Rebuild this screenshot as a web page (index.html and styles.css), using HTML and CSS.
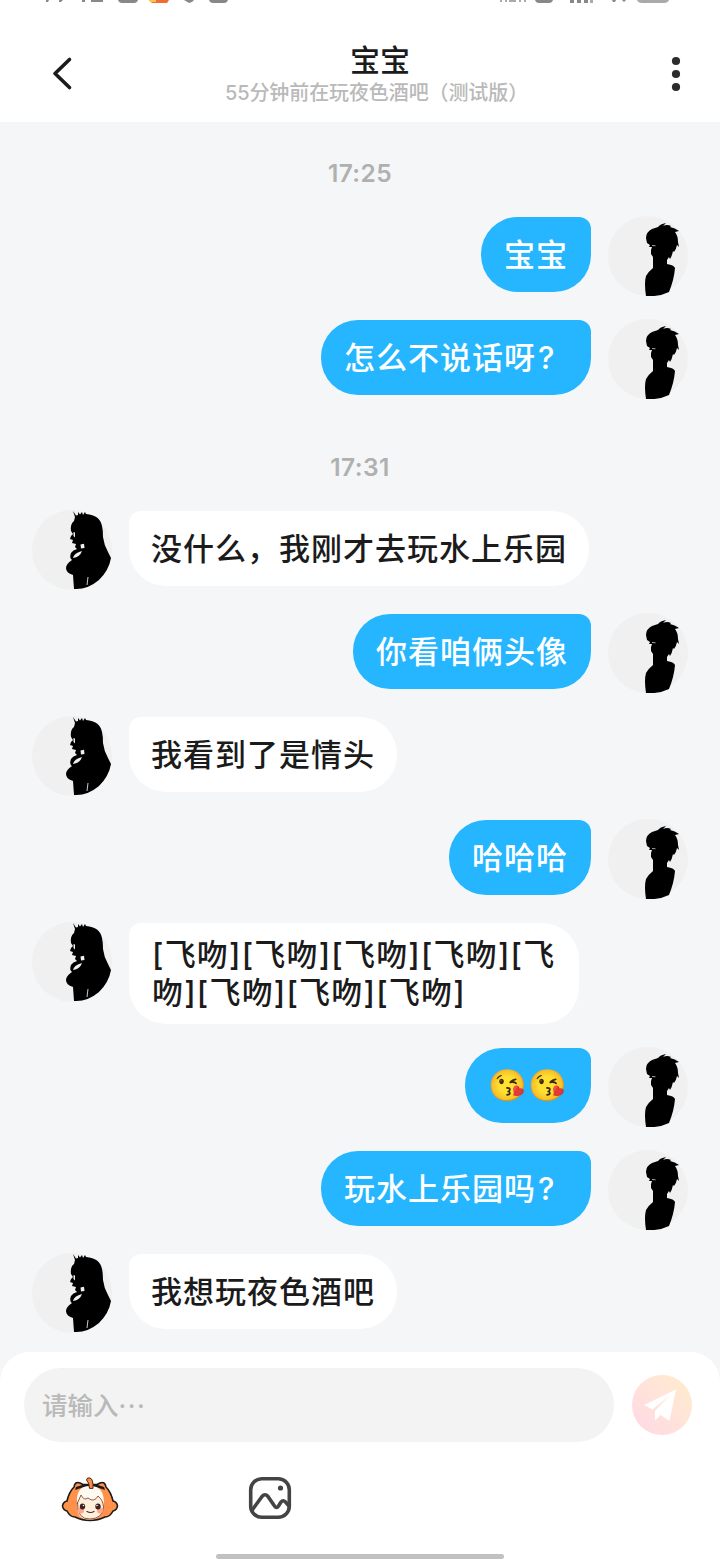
FILE: index.html
```html
<!DOCTYPE html>
<html lang="zh-CN">
<head>
<meta charset="utf-8">
<title>宝宝</title>
<link rel="stylesheet" href="styles.css">
</head>
<body>
<svg class="defs" width="0" height="0">
  <defs>
    <symbol id="boy" viewBox="0 0 100 100">
      <circle cx="48" cy="51" r="40" fill="#f0f0f1"/>
      <path fill="#000" d="M46 33Q46 27 52 24L58 22Q60 19 66 18L63 21Q67 19 71 21L70 22Q75 23 79 26L75 27Q78 31 78 37L79 42L77 40Q76 45 74 47L73 46Q72 51 70 54L69 52L67 55V59Q74 60 75 63Q74 75 69 87Q59 92 46 91Q44 78 46 71Q48 67 53 63V52L51 49V45L52 42L49 42L50 40L47 38Z"/>
      <path d="M52 40.500l3.500 .3" stroke="#ccc" stroke-width=".8"/>
    </symbol>
    <symbol id="girl" viewBox="0 0 100 100">
      <circle cx="47" cy="50" r="40" fill="#f0f0f1"/>
      <path fill="#000" d="M48 11L51 15.500L53 15L53 12L55 14.500L57 12L58 15L60 12L61 14Q75 15 77 26Q78 30 78 37Q79 45 83 52L86 58Q84 70 74 80Q62 90 49 89L48 75Q41 73 41 68Q41 64 47 60Q44 58 46 53Q48 50 52 49L50 47L51 44L47 43L48 40L45 39L46 36L48 34L46 31Q45 24 49 21L50 17Z"/>
      <path fill="#f0f0f1" d="M55.500 44.500l3.500-.8.500 4.300-3.500.5zM48 58Q49 53 57 51Q55 57 48 58zM48.500 32l1.500 .5v5l-1.500-1.500z"/>
      <path d="M63 77l-1 8" stroke="#ccc" stroke-width="1"/>
    </symbol>
  </defs>
</svg>
<div class="screen">
  <svg class="status" viewBox="0 0 720 4" fill="#888">
    <path d="M46 0h3l-1 2h-2zM59 0h4l-2 2h-2zM82 0h3v2h-3zM91 0h12v2H91zM118 0h20q-1 3-4 3h-12q-3 0-4-3zM184 0h10q-2 3-5 3zM209 0h19q-1 3-4 3h-11q-3 0-4-3zM535 0h18q-1 3-4 3h-10q-3 0-4-3zM570 0h4v3h-4zM577 0h4v3h-4zM584 0h4v3h-4zM612 0h4l-1 2h-2zM622 0h4l-2 2z"/>
    <path fill="#aaa" d="M500 0h2v2h-2zM505 0h2v2h-2zM509 0h7v2h-7zM519 0h2v2h-2zM524 0h2v2h-2zM590 0h3v3h-3zM637 0h32q-1 3-5 3h-22q-4 0-5-3z"/>
    <path fill="#f36b32" d="M149 0h20l-2 3h-15z"/>
    <path fill="#f4c84a" d="M149 0h7v2h-6z"/>
  </svg>
  <header class="header">
    <svg class="back" viewBox="0 0 24 36"><path d="M20.500 4.500L6 18.500l14.500 14" fill="none" stroke="#1b1b1b" stroke-width="3.600" stroke-linecap="round" stroke-linejoin="round"/></svg>
    <div class="heading">
      <h1 class="name">宝宝</h1>
      <p class="activity">55分钟前在玩夜色酒吧（测试版）</p>
    </div>
    <svg class="more" viewBox="0 0 10 36" fill="#2c2c2c"><circle cx="5" cy="5" r="4.100"/><circle cx="5" cy="18" r="4.100"/><circle cx="5" cy="31" r="4.100"/></svg>
  </header>

  <main class="chat">
    <time class="time">17:25</time>
    <div class="row me"><p class="bubble">宝宝</p><svg class="avatar" viewBox="8 11 80 80"><use href="#boy" width="100" height="100"/></svg></div>
    <div class="row me"><p class="bubble">怎么不说话呀<span class="mark">?</span></p><svg class="avatar" viewBox="8 11 80 80"><use href="#boy" width="100" height="100"/></svg></div>
    <time class="time">17:31</time>
    <div class="row"><svg class="avatar" viewBox="7 10 80 80"><use href="#girl" width="100" height="100"/></svg><p class="bubble">没什么，我刚才去玩水上乐园</p></div>
    <div class="row me"><p class="bubble">你看咱俩头像</p><svg class="avatar" viewBox="8 11 80 80"><use href="#boy" width="100" height="100"/></svg></div>
    <div class="row"><svg class="avatar" viewBox="7 10 80 80"><use href="#girl" width="100" height="100"/></svg><p class="bubble">我看到了是情头</p></div>
    <div class="row me"><p class="bubble">哈哈哈</p><svg class="avatar" viewBox="8 11 80 80"><use href="#boy" width="100" height="100"/></svg></div>
    <div class="row"><svg class="avatar" viewBox="7 10 80 80"><use href="#girl" width="100" height="100"/></svg><p class="bubble long">[飞吻][飞吻][飞吻][飞吻][飞<br>吻][飞吻][飞吻][飞吻]</p></div>
    <div class="row me"><p class="bubble emoji">😘😘</p><svg class="avatar" viewBox="8 11 80 80"><use href="#boy" width="100" height="100"/></svg></div>
    <div class="row me"><p class="bubble">玩水上乐园吗<span class="mark">?</span></p><svg class="avatar" viewBox="8 11 80 80"><use href="#boy" width="100" height="100"/></svg></div>
    <div class="row"><svg class="avatar" viewBox="7 10 80 80"><use href="#girl" width="100" height="100"/></svg><p class="bubble">我想玩夜色酒吧</p></div>
  </main>

  <footer class="composer">
    <div class="entry">
      <div class="field">请输入<span class="dots">···</span></div>
      <svg class="send" viewBox="0 0 60 60">
        <defs><linearGradient id="glow" x1="0" y1="1" x2="1" y2="0"><stop offset=".15" stop-color="#ffdbe3"/><stop offset=".9" stop-color="#ffebcf"/></linearGradient></defs>
        <circle cx="30" cy="30" r="30" fill="url(#glow)"/>
        <path fill="#fff" d="M44 14.500L12 30l8.500 4.500L37 21 23 36v9.500l5.500-5.500L37.500 46z"/>
      </svg>
    </div>
    <div class="tools">
      <svg class="mascot" viewBox="0 0 80 65" stroke-linejoin="round" stroke-linecap="round">
        <path d="M24 21Q25 15 30 17L33 18.500H47L50 17Q55 15 56 21Q61 26 63 35Q67 36 67.500 40Q67 44 63 45Q60 51 55 51Q48 54.500 40 54.500T25 51Q20 51 17 45Q13 44 12.500 40Q13 36 17 35Q19 26 24 21Z" fill="#ff914b" stroke="#1c1918" stroke-width="1.600"/>
        <path d="M26 21Q40 15 54 21L55 24Q40 17 25 24Z" fill="#1c1918"/>
        <path d="M27.500 41Q24 20 40 20T53.500 41Q53 53 40 53.500T27.500 41Z" fill="#fffaf1"/>
        <path d="M27.500 37L31 29Q34 35 38 32Q44 37 48 30Q53 34 53.500 41Q53 52.500 40 53T27.500 37Z" fill="#fff0dc" stroke="#6d3524" stroke-width=".8"/>
        <path d="M39.500 22Q39 16 36.500 14Q37 11 40 12Q43.500 13 43 22Z" fill="#ff8b42" stroke="#4c2417" stroke-width="1"/>
        <circle cx="31" cy="44.500" r="3" fill="#ffa590"/><circle cx="50" cy="44.500" r="3" fill="#ffa590"/>
        <ellipse cx="32.500" cy="40.500" rx="2.700" ry="3" fill="#402221"/><ellipse cx="48" cy="40.500" rx="2.700" ry="3" fill="#402221"/>
        <circle cx="33.500" cy="39.500" r=".8" fill="#fff"/><circle cx="47" cy="39.500" r=".8" fill="#fff"/>
        <path d="M37 45.500q3.500 2 7 0" fill="none" stroke="#4a2724" stroke-width="1.200"/>
      </svg>
      <svg class="photo" viewBox="0 0 44 44" fill="none" stroke="#444" stroke-width="3.600" stroke-linejoin="round">
        <rect x="2.700" y="2.700" width="38.600" height="38.600" rx="11"/>
        <path d="M3.500 35L14 20.500Q17 17 20 20.500l6.500 9.500q2 3 4 0l2.500-4q2-2.500 4.500 0l3.500 4"/>
        <circle cx="32.500" cy="12" r="2.600" fill="#444" stroke="none"/>
      </svg>
    </div>
    <div class="home"></div>
  </footer>
</div>
</body>
</html>
```
FILE: styles.css
```css
* { box-sizing: border-box; margin: 0; padding: 0; }
body { width: 720px; background: #f5f6f8; font-family: Inter, "Noto Sans CJK SC", sans-serif; color: #1b1b1b; }
.defs { position: absolute; }
.screen { height: 1559px; display: flex; flex-direction: column; overflow: hidden; }
.status { width: 720px; height: 4px; background: #fff; flex: none; }
.header { height: 118px; flex: none; background: #fff; display: flex; justify-content: space-between; padding: 0 39px 0 49px; }
.back { width: 24px; height: 36px; margin-top: 51px; }
.more { width: 10px; height: 36px; margin-top: 52px; }
.heading { width: 320px; padding: 39px 0 0 16px; text-align: center; }
.name { font-size: 30px; line-height: 34px; font-weight: 500; }
.activity { margin-left: -7px; font-size: 20px; line-height: 33px; font-weight: 500; color: #b9b9b9; white-space: nowrap; letter-spacing: -.1px; }
.chat { flex: 1; min-height: 0; display: flex; flex-direction: column; gap: 23px; padding: 6px 32px 0; }
.time { height: 65px; padding-top: 25px; text-align: center; font-weight: 600; font-size: 24.500px; line-height: 40px; color: #b0b0b0; letter-spacing: .4px; }
.row { display: flex; align-items: flex-start; gap: 17px; flex: none; }
.me { justify-content: flex-end; }
.avatar { width: 80px; height: 80px; flex: none; }
.bubble { margin-top: 1px; min-height: 75px; padding: 16px 22px; border-radius: 12px 37px 37px 37px; background: #fff; font-size: 31px; line-height: 43px; letter-spacing: 1px; font-weight: 500; white-space: nowrap; }
.me .bubble { padding: 16px 23px; border-radius: 37px 12px 37px 37px; background: #25b6ff; color: #fff; }
.mark { display: inline-block; width: 32px; padding-left: 2px; }
.bubble.long { width: 450px; height: 101px; padding: 13px 0 0 23px; line-height: 38px; letter-spacing: 1.200px; }
.me .emoji { width: 126px; line-height: 41px; padding-right: 0; }
.composer { height: 207px; flex: none; background: #fff; border-radius: 30px 30px 0 0; padding: 16px 28px 0 24px; }
.entry { display: flex; align-items: center; gap: 18px; }
.field { width: 590px; height: 74px; border-radius: 37px; background: #f3f3f3; color: #b9b9b9; padding-left: 18px; font-size: 25.500px; line-height: 75px; font-weight: 500; }
.dots { letter-spacing: 1.500px; }
.send { width: 60px; height: 60px; }
.tools { display: flex; align-items: center; gap: 118px; padding-left: 26px; height: 112px; }
.mascot { width: 80px; height: 65px; }
.photo { width: 44px; height: 44px; }
.home { width: 288px; height: 5px; border-radius: 3px; background: #c1c1c1; margin-left: 192px; }
```
